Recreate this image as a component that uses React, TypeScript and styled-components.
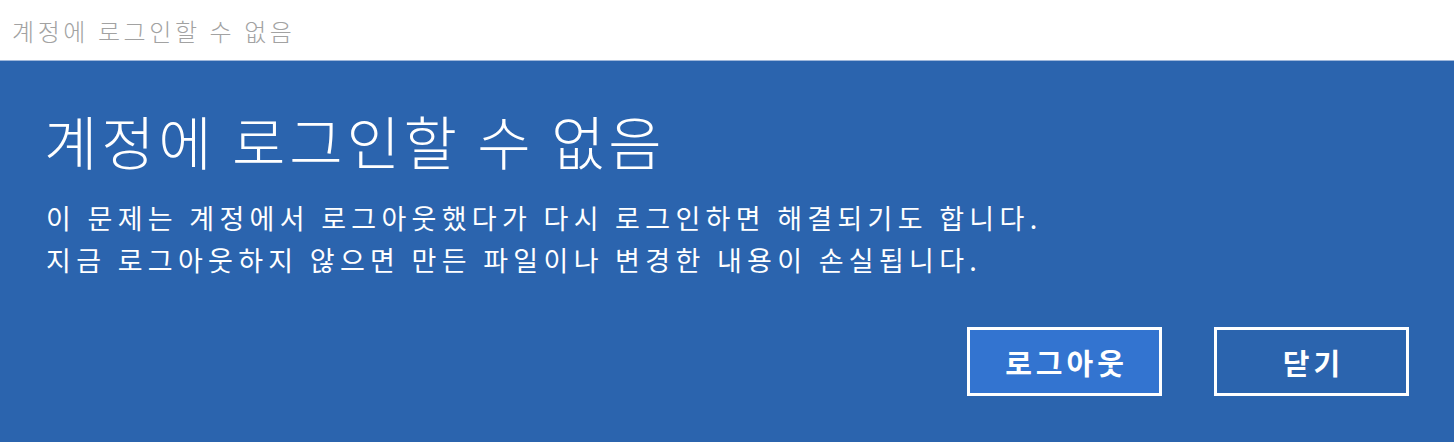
import styled, { createGlobalStyle } from "styled-components";

const GlobalStyle = createGlobalStyle`
  html, body {
    margin: 0;
    padding: 0;
    background: #2b64ae;
  }
  body {
    font-family: "Noto Sans CJK KR", "Noto Sans", sans-serif;
  }
`;

const Window = styled.div`
  width: 1454px;
  height: 442px;
  display: flex;
  flex-direction: column;
  overflow: hidden;
`;

const TitleBar = styled.div`
  height: 60px;
  flex: none;
  background: #ffffff;
  border-bottom: 1px solid #9fb7da;
  display: flex;
  align-items: center;
  padding-left: 12px;
  font-size: 24px;
  letter-spacing: 3.6px;
  color: #a2a2a2;
  font-weight: 300;
`;

const Body = styled.div`
  flex: 1;
  background: #2b64ae;
  padding: 44px 45px 0 44px;
  display: flex;
  flex-direction: column;
  color: #ffffff;
`;

const Heading = styled.h1`
  margin: 0;
  font-size: 58px;
  font-weight: 300;
  line-height: 70px;
  letter-spacing: 3.8px;
`;

const Message = styled.p`
  margin: 22px 0 0 2px;
  font-size: 27px;
  font-weight: 400;
  line-height: 42px;
  letter-spacing: 5.3px;
`;

const Actions = styled.div`
  margin-top: 46px;
  display: flex;
  justify-content: flex-end;
  gap: 52px;
`;

const Button = styled.button<{ $primary?: boolean }>`
  width: 195px;
  height: 69px;
  box-sizing: border-box;
  border: 3px solid #ffffff;
  background: ${(p) => (p.$primary ? "#3374d0" : "#2b64ae")};
  color: #ffffff;
  font-family: "Noto Sans CJK KR", "Noto Sans", sans-serif;
  font-size: 29px;
  font-weight: 700;
  letter-spacing: 4px;
  padding: 0 0 0 4px;
  cursor: pointer;
`;

export default function App() {
  return (
    <>
      <GlobalStyle />
      <Window>
        <TitleBar>계정에 로그인할 수 없음</TitleBar>
        <Body>
          <Heading>계정에 로그인할 수 없음</Heading>
          <Message>
            이 문제는 계정에서 로그아웃했다가 다시 로그인하면 해결되기도 합니다.
            <br />
            지금 로그아웃하지 않으면 만든 파일이나 변경한 내용이 손실됩니다.
          </Message>
          <Actions>
            <Button $primary>로그아웃</Button>
            <Button>닫기</Button>
          </Actions>
        </Body>
      </Window>
    </>
  );
}
